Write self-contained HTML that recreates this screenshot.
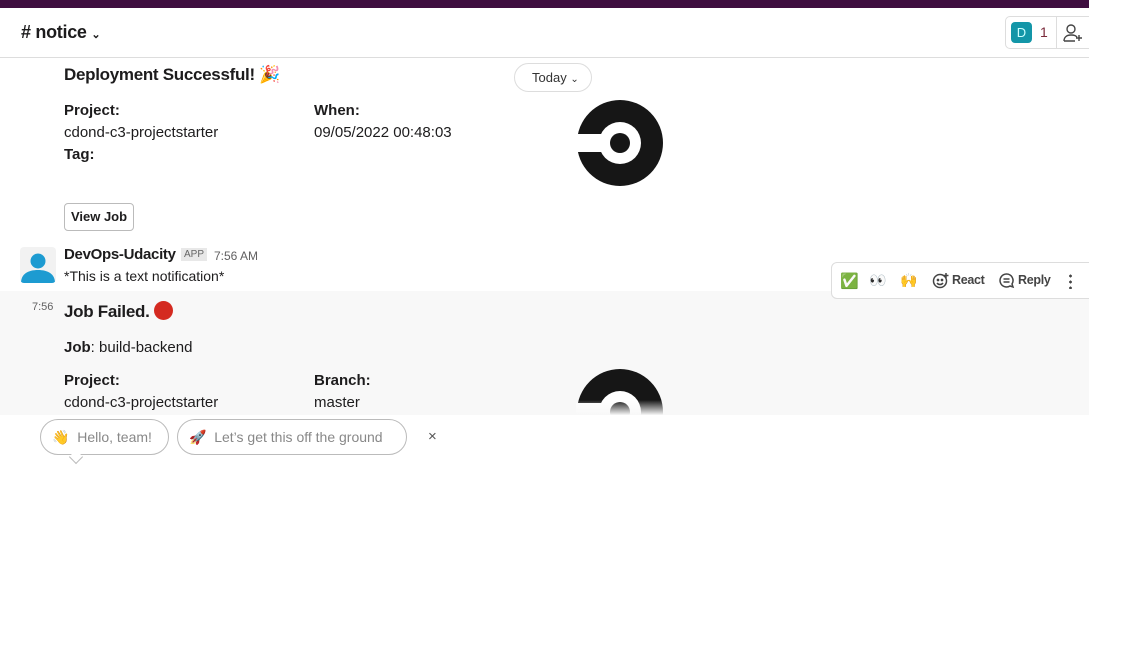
<!DOCTYPE html>
<html><head><meta charset="utf-8"><style>
*{margin:0;padding:0;box-sizing:border-box}
body{width:1121px;height:654px;background:#fff;font-family:"Liberation Sans",sans-serif;color:#1d1c1d;position:relative;overflow:hidden}
.a{position:absolute}
.b{font-weight:bold}
.t{font-size:15px}
#w{position:absolute;left:0;top:0;width:1089px;height:654px;overflow:hidden}
</style></head><body><div id="w">
<div class="a" style="left:0;top:0;width:1089px;height:8px;background:#3f0e40"></div>
<div class="a" style="left:0;top:57px;width:1089px;height:1px;background:#ddd"></div>
<div class="a b" style="left:21px;top:22px;font-size:18px;letter-spacing:-0.3px">#&nbsp;notice <span style="font-size:11px">&#8964;</span></div>
<div class="a" style="left:1005px;top:16px;width:92px;height:33px;border:1px solid #ddd;border-radius:5px"></div>
<div class="a" style="left:1011px;top:22px;width:21px;height:21px;background:#1396a8;border-radius:4px;color:#cff;font-size:13px;text-align:center;line-height:21px">D</div>
<div class="a" style="left:1040px;top:24px;font-size:14px;color:#7a2a3a">1</div>
<div class="a" style="left:1056px;top:17px;width:1px;height:32px;background:#ddd"></div>
<svg class="a" style="left:1062px;top:22px" width="22" height="22" viewBox="0 0 22 22" fill="none" stroke="#444" stroke-width="1.4"><circle cx="9" cy="7" r="4"/><path d="M2 19c0-4 3-6 7-6s5 1 6 2M2 19h11M17 13v6M14 16h6"/></svg>

<div class="a b" style="left:64px;top:65px;font-size:17px;letter-spacing:-0.3px">Deployment Successful! <span style="font-size:17px">🎉</span></div>
<div class="a" style="left:514px;top:63px;width:78px;height:29px;border:1px solid #ddd;border-radius:15px;font-size:13px;line-height:27px;padding-left:17px;color:#333">Today <span style="font-size:10px">&#8964;</span></div>
<div class="a b t" style="left:64px;top:102px">Project:</div>
<div class="a t" style="left:64px;top:124px">cdond-c3-projectstarter</div>
<div class="a b t" style="left:64px;top:146px">Tag:</div>
<div class="a b t" style="left:314px;top:102px">When:</div>
<div class="a t" style="left:314px;top:124px">09/05/2022 00:48:03</div>
<svg class="a" style="left:576px;top:100px" width="88" height="88" viewBox="0 0 88 88"><circle cx="44" cy="43" r="43" fill="#161616"/><circle cx="44" cy="43" r="21" fill="#fff"/><rect x="0" y="34" width="44" height="18" fill="#fff"/><circle cx="44" cy="43" r="10" fill="#161616"/></svg>
<div class="a" style="left:64px;top:203px;width:70px;height:28px;border:1px solid #bbb;border-radius:4px;font-size:13px;font-weight:bold;text-align:center;line-height:26px">View Job</div>

<div class="a" style="left:20px;top:247px;width:36px;height:36px;background:#f2f2f2;border-radius:4px;overflow:hidden"><svg width="36" height="36" viewBox="0 0 36 36"><circle cx="18" cy="14" r="7.5" fill="#1d9bd1"/><path d="M1 36c0-9 7-13 17-13s17 4 17 13z" fill="#1d9bd1"/></svg></div>
<div class="a b" style="left:64px;top:246px;font-size:15px;letter-spacing:-0.3px">DevOps-Udacity</div>
<div class="a" style="left:181px;top:248px;background:#e8e8e8;color:#666;font-size:10px;padding:1px 3px">APP</div>
<div class="a" style="left:214px;top:249px;font-size:12px;color:#616061">7:56 AM</div>
<div class="a" style="left:64px;top:268px;font-size:14px">*This is a text notification*</div>

<div class="a" style="left:0;top:291px;width:1089px;height:124px;background:#f8f8f8"></div>
<div class="a" style="left:32px;top:301px;font-size:11px;color:#616061">7:56</div>
<div class="a b" style="left:64px;top:301px;font-size:17px;letter-spacing:-0.3px">Job Failed. <span style="display:inline-block;width:19px;height:19px;border-radius:50%;background:#d42a20;vertical-align:-3px"></span></div>
<div class="a t" style="left:64px;top:339px"><b>Job</b>: build-backend</div>
<div class="a b t" style="left:64px;top:372px">Project:</div>
<div class="a t" style="left:64px;top:394px">cdond-c3-projectstarter</div>
<div class="a b t" style="left:314px;top:372px">Branch:</div>
<div class="a t" style="left:314px;top:394px">master</div>
<div class="a" style="left:576px;top:369px;width:88px;height:46px;overflow:hidden"><svg width="88" height="88" viewBox="0 0 88 88"><circle cx="44" cy="43" r="43" fill="#161616"/><circle cx="44" cy="43" r="21" fill="#fff"/><rect x="0" y="34" width="44" height="18" fill="#fff"/><circle cx="44" cy="43" r="10" fill="#161616"/></svg></div>
<div class="a" style="left:576px;top:400px;width:88px;height:15px;background:linear-gradient(rgba(248,248,248,0),#f8f8f8)"></div>

<div class="a" style="left:831px;top:262px;width:266px;height:37px;background:#fff;border:1px solid #ddd;border-radius:6px"></div>
<div class="a" style="left:840px;top:272px;font-size:15px">✅</div>
<div class="a" style="left:869px;top:272px;font-size:14px">👀</div>
<div class="a" style="left:900px;top:272px;font-size:14px">🙌</div>
<svg class="a" style="left:932px;top:272px" width="17" height="17" viewBox="0 0 17 17" fill="none" stroke="#444" stroke-width="1.5"><circle cx="8" cy="9" r="6.5"/><circle cx="6" cy="8" r=".6" fill="#444"/><circle cx="10" cy="8" r=".6" fill="#444"/><path d="M5 11c1.5 2 4.5 2 6 0M14 1v5M11.5 3.5h5"/></svg>
<div class="a b" style="left:952px;top:273px;font-size:12.5px;color:#444;letter-spacing:-0.3px">React</div>
<svg class="a" style="left:998px;top:272px" width="17" height="17" viewBox="0 0 17 17" fill="none" stroke="#444" stroke-width="1.5"><path d="M8.5 2a6.5 6.5 0 1 0 3.5 12l3 1-1-3A6.5 6.5 0 0 0 8.5 2z"/><path d="M5.5 7h6M5.5 10h6"/></svg>
<div class="a b" style="left:1018px;top:273px;font-size:12.5px;color:#444;letter-spacing:-0.3px">Reply</div>
<div class="a" style="left:1069px;top:273px;width:3px;height:16px;background:radial-gradient(circle,#444 1.3px,transparent 1.5px) 0 0/3px 6px"></div>

<div class="a" style="left:40px;top:419px;width:129px;height:36px;border:1px solid #bbb;border-radius:18px;background:#fff"></div>
<div class="a" style="left:71px;top:452px;width:10px;height:10px;background:#fff;border-right:1px solid #bbb;border-bottom:1px solid #bbb;transform:rotate(45deg)"></div>
<div class="a" style="left:52px;top:429px;font-size:14px;color:#888">👋&nbsp; Hello, team!</div>
<div class="a" style="left:177px;top:419px;width:230px;height:36px;border:1px solid #bbb;border-radius:18px;background:#fff"></div>
<div class="a" style="left:189px;top:429px;font-size:14px;color:#888">🚀&nbsp; Let’s get this off the ground</div>
<div class="a" style="left:428px;top:428px;font-size:15px;color:#555">×</div>
</div></body></html>
